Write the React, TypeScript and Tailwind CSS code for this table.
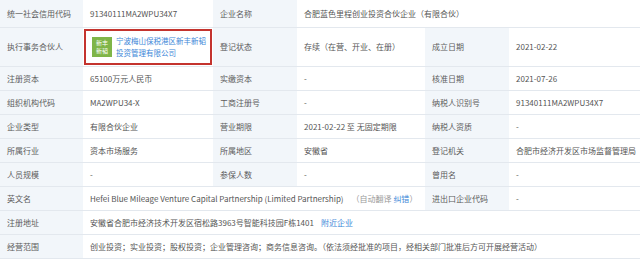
import React from 'react';

const Label = ({ children }: { children: React.ReactNode }) => (
  <div className="flex items-center bg-[#f2f6fa] border-b border-[#e3e8ee] pl-[7px] text-[#5c5c5c]">{children}</div>
);

const Value = ({ children, className = '' }: { children: React.ReactNode; className?: string }) => (
  <div className={`flex items-center bg-white border-b border-[#e3e8ee] pl-[7px] text-[#555] ${className}`}>{children}</div>
);

export default function App() {
  return (
    <div
      className="w-[640px] h-[263px] bg-white overflow-hidden text-[8px] leading-none"
      style={{ fontFamily: '"Noto Sans CJK SC", "Noto Sans", sans-serif' }}
    >
      <div className="grid grid-cols-[83px_130px_84px_128px_84px_131px] grid-rows-[28px_39px_repeat(8,24px)]">
        <Label>统一社会信用代码</Label>
        <Value>91340111MA2WPU34X7</Value>
        <Label>企业名称</Label>
        <Value className="col-span-3">合肥蓝色里程创业投资合伙企业（有限合伙）</Value>

        <Label>执行事务合伙人</Label>
        <div className="bg-white border-b border-[#e3e8ee] p-[1px]">
          <div className="h-full border-2 border-[#c4332e] flex items-center gap-[4px] pl-[6px]">
            <div className="w-[20px] h-[20px] bg-[#7fb548] text-white text-[6px] leading-[8px] flex flex-col items-center justify-center shrink-0">
              <span>新丰</span>
              <span>新韬</span>
            </div>
            <div className="text-[#3d87d8] text-[7.5px] leading-[12px] whitespace-nowrap">
              <div>宁波梅山保税港区新丰新韬</div>
              <div>投资管理有限公司</div>
            </div>
          </div>
        </div>
        <Label>登记状态</Label>
        <Value>存续（在营、开业、在册）</Value>
        <Label>成立日期</Label>
        <Value>2021-02-22</Value>

        <Label>注册资本</Label>
        <Value>65100万元人民币</Value>
        <Label>实缴资本</Label>
        <Value>-</Value>
        <Label>核准日期</Label>
        <Value>2021-07-26</Value>

        <Label>组织机构代码</Label>
        <Value>MA2WPU34-X</Value>
        <Label>工商注册号</Label>
        <Value>-</Value>
        <Label>纳税人识别号</Label>
        <Value>91340111MA2WPU34X7</Value>

        <Label>企业类型</Label>
        <Value>有限合伙企业</Value>
        <Label>营业期限</Label>
        <Value>2021-02-22 至 无固定期限</Value>
        <Label>纳税人资质</Label>
        <Value>-</Value>

        <Label>所属行业</Label>
        <Value>资本市场服务</Value>
        <Label>所属地区</Label>
        <Value>安徽省</Value>
        <Label>登记机关</Label>
        <Value>合肥市经济开发区市场监督管理局</Value>

        <Label>人员规模</Label>
        <Value>-</Value>
        <Label>参保人数</Label>
        <Value>-</Value>
        <Label>曾用名</Label>
        <Value>-</Value>

        <Label>英文名</Label>
        <Value className="col-span-3 whitespace-nowrap">
          Hefei Blue Mileage Venture Capital Partnership (Limited Partnership)
          <span className="ml-[8px] text-[#999]">
            （自动翻译 <span className="text-[#3d87d8]">纠错</span>）
          </span>
        </Value>
        <Label>进出口企业代码</Label>
        <Value>-</Value>

        <Label>注册地址</Label>
        <Value className="col-span-5">
          安徽省合肥市经济技术开发区宿松路3963号智能科技园F栋1401
          <span className="ml-[7px] text-[#3d87d8]">附近企业</span>
        </Value>

        <Label>经营范围</Label>
        <Value className="col-span-5 whitespace-nowrap">
          创业投资；实业投资；股权投资；企业管理咨询；商务信息咨询。（依法须经批准的项目，经相关部门批准后方可开展经营活动）
        </Value>
      </div>
    </div>
  );
}
